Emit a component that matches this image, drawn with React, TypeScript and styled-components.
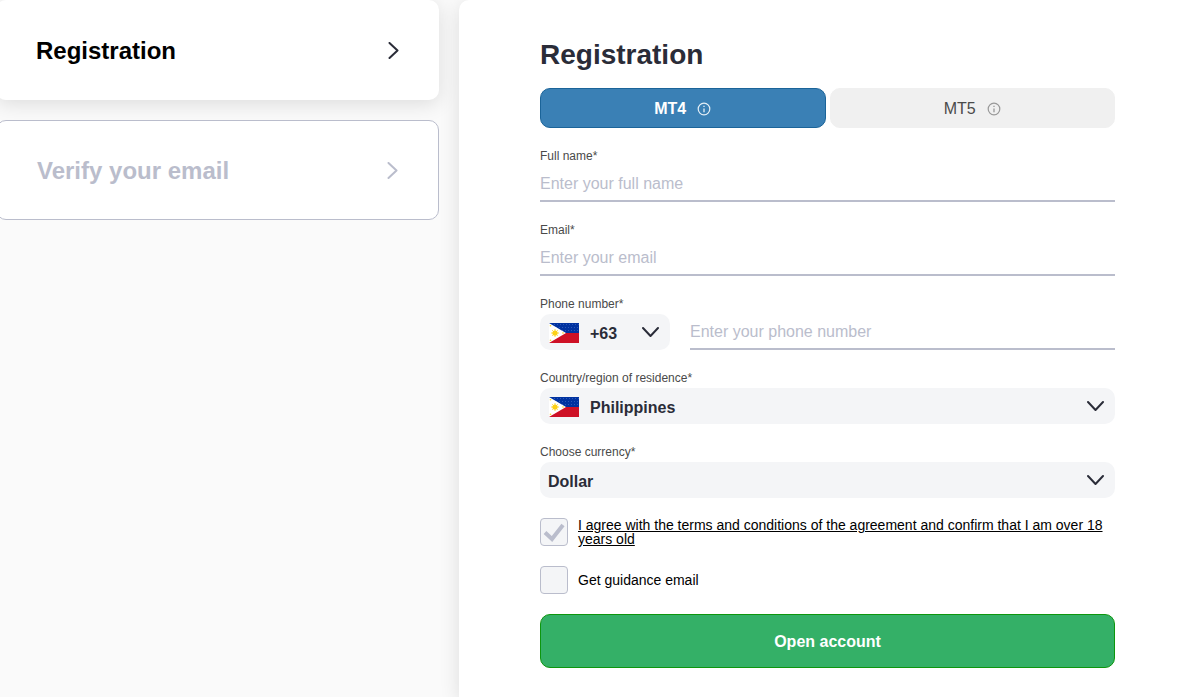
import React from "react";
import styled, { createGlobalStyle } from "styled-components";

const GlobalStyle = createGlobalStyle`
  *, *::before, *::after { box-sizing: border-box; }
  body {
    margin: 0;
    background: #fafafa;
    color: #2a2c38;
    font-family: "Liberation Sans", Arial, sans-serif;
    font-size: 16px;
  }
  button, input, select { font: inherit; color: inherit; }
`;

const Page = styled.div`
  display: grid;
  grid-template-columns: minmax(0, 443fr) minmax(0, 733fr);
  gap: 20px;
  min-height: 100vh;
  margin-left: -4px;
`;

const Steps = styled.nav`
  display: flex;
  flex-direction: column;
  gap: 20px;
`;

const Step = styled.a<{ $active?: boolean }>`
  display: flex;
  align-items: center;
  justify-content: space-between;
  height: 100px;
  padding: 2px 40px 0;
  border: ${(p) => (p.$active ? "none" : "1px solid #babdcc")};
  border-radius: 10px;
  background: #fff;
  box-shadow: ${(p) => (p.$active ? "0 4px 20px rgba(0, 0, 0, 0.12)" : "none")};
  color: ${(p) => (p.$active ? "#000" : "#babdcc")};
  font-size: 24px;
  font-weight: 700;
  line-height: 28px;
  text-decoration: none;
`;

const StepArrow = styled.svg<{ $active?: boolean }>`
  width: 11px;
  height: 18px;
  fill: none;
  stroke: ${(p) => (p.$active ? "#2a2c38" : "#babdcc")};
  stroke-width: 2;
  stroke-linecap: round;
  stroke-linejoin: round;
`;

const Panel = styled.main`
  padding: 39px 77px 28px 81px;
  border-radius: 10px 0 0 0;
  background: #fff;
  box-shadow: 0 4px 20px rgba(0, 0, 0, 0.12);
`;

const Title = styled.h1`
  margin: 0 0 17px;
  font-size: 28px;
  line-height: 32px;
`;

const Form = styled.form`
  display: flex;
  flex-direction: column;
  gap: 20px;
`;

const Fields = styled.div`
  display: flex;
  flex-direction: column;
  gap: 18px;
`;

const Tabs = styled.div`
  display: grid;
  grid-template-columns: 1fr 1fr;
  gap: 4px;
`;

const Tab = styled.button<{ $active?: boolean }>`
  display: flex;
  align-items: center;
  justify-content: center;
  gap: 11px;
  height: 40px;
  padding: 2px 0 0;
  border: 1px solid ${(p) => (p.$active ? "#1b6499" : "#f0f0f0")};
  border-radius: 10px;
  background: ${(p) => (p.$active ? "#3a80b5" : "#f0f0f0")};
  color: ${(p) => (p.$active ? "#fff" : "#4a4a4a")};
  font-weight: ${(p) => (p.$active ? 700 : 400)};
`;

const InfoSvg = styled.svg<{ $active?: boolean }>`
  width: 14px;
  height: 14px;
  fill: none;
  stroke: ${(p) => (p.$active ? "#e4eef6" : "#989898")};
`;

const Field = styled.div`
  display: flex;
  flex-direction: column;
`;

const Label = styled.label`
  color: #4a4a4a;
  font-size: 12px;
  line-height: 20px;
`;

const TextInput = styled.input`
  width: 100%;
  min-width: 0;
  height: 36px;
  padding: 2px 0 0;
  border: 0;
  border-bottom: 2px solid #babdcc;
  border-radius: 0;
  outline: 0;
  background: transparent;
  &::placeholder { color: #babdcc; opacity: 1; }
`;

const PhoneRow = styled.div`
  display: grid;
  grid-template-columns: 130px 1fr;
  gap: 20px;
`;

const SelectBox = styled.div`
  display: grid;
  grid-template-columns: 30px 1fr 18px;
  align-items: center;
  height: 36px;
  padding: 0 10px 0 9px;
  border-radius: 10px;
  background: #f4f5f7;
`;

const Select = styled.select<{ $flag?: boolean }>`
  grid-area: 1 / 1 / 2 / 4;
  height: 36px;
  margin: 0 -10px 0 -9px;
  padding: 2px 30px 0 ${(p) => (p.$flag ? 50 : 8)}px;
  border: 0;
  border-radius: 10px;
  appearance: none;
  background: transparent;
  font-weight: 700;
`;

const FlagSvg = styled.svg`
  grid-area: 1 / 1 / 2 / 2;
  width: 30px;
  height: 20px;
  margin-top: 2px;
  pointer-events: none;
`;

const Chevron = styled.svg`
  grid-area: 1 / 3 / 2 / 4;
  width: 18px;
  height: 12px;
  fill: none;
  stroke: #2a2c38;
  stroke-width: 2;
  stroke-linecap: round;
  stroke-linejoin: round;
  pointer-events: none;
`;

const CheckRow = styled.label`
  display: grid;
  grid-template-columns: 28px 1fr;
  column-gap: 10px;
  align-items: center;
  color: #000;
  font-size: 14px;
  line-height: 14px;
`;

const CheckInput = styled.input`
  grid-area: 1 / 1 / 2 / 2;
  width: 28px;
  height: 28px;
  margin: 0;
  border: 1px solid #babdcc;
  border-radius: 4px;
  appearance: none;
  background: #f4f5f7;
  & + svg { visibility: hidden; }
  &:checked + svg { visibility: visible; }
`;

const CheckMark = styled.svg`
  grid-area: 1 / 1 / 2 / 2;
  width: 28px;
  height: 28px;
  fill: none;
  stroke: #babdcc;
  stroke-width: 4;
  pointer-events: none;
`;

const TermsText = styled.span`
  text-decoration: underline;
`;

const Submit = styled.button`
  height: 54px;
  padding: 2px 0 0;
  border: 1px solid #0d960d;
  border-radius: 10px;
  background: #34b067;
  color: #fff;
  font-weight: 700;
`;

const Info = ({ active }: { active?: boolean }) => (
  <InfoSvg $active={active} viewBox="0 0 14 14" aria-hidden="true">
    <circle cx="7" cy="7" r="5.8" strokeWidth="1.2" />
    <path d="M7 6.4V10.2M7 3.8V5.1" strokeWidth="1.3" />
  </InfoSvg>
);

const Down = () => (
  <Chevron viewBox="0 0 18 12" aria-hidden="true">
    <path d="M1 2L8.5 10L16 2" />
  </Chevron>
);

const Check = () => (
  <CheckMark viewBox="0 0 28 28" aria-hidden="true">
    <path d="M5 14.5L12 21L23 7" />
  </CheckMark>
);

const Flag = () => (
  <FlagSvg viewBox="0 0 30 20" aria-hidden="true">
    <path fill="#0032a0" d="M0 0h30v10H0z" />
    <path
      stroke="#2a58b8"
      strokeWidth="1"
      strokeDasharray="1 2"
      d="M5 1.5h25M7 4.5h23M13 7.5h17"
    />
    <path fill="#ce1126" d="M0 10h30v10H0z" />
    <path fill="#fff" d="M0 0L17 10L0 20z" />
    <circle cx="6" cy="10" r="2.6" fill="#fcd116" />
    <path
      stroke="#fcd116"
      strokeWidth="0.8"
      d="M6 6v8M2 10h8M3.2 7.2l5.6 5.6M3.2 12.8l5.6-5.6"
    />
    <g fill="#fcd116">
      <circle cx="1.5" cy="2.7" r="0.8" />
      <circle cx="1.5" cy="17.3" r="0.8" />
      <circle cx="14" cy="10" r="0.8" />
    </g>
  </FlagSvg>
);

const steps = ["Registration", "Verify your email"];

export default function App() {
  return (
    <>
      <GlobalStyle />
      <Page>
        <Steps aria-label="Steps">
          {steps.map((name, i) => (
            <Step key={name} href="#" $active={i === 0}>
              {name}
              <StepArrow $active={i === 0} viewBox="0 0 11 18" aria-hidden="true">
                <path d="M1.5 1L9.5 8.5L1.5 16" />
              </StepArrow>
            </Step>
          ))}
        </Steps>
        <Panel>
          <Title>Registration</Title>
          <Form onSubmit={(e) => e.preventDefault()}>
            <Fields>
              <Tabs>
                <Tab type="button" $active>
                  MT4
                  <Info active />
                </Tab>
                <Tab type="button">
                  MT5
                  <Info />
                </Tab>
              </Tabs>
              <Field>
                <Label htmlFor="name">Full name*</Label>
                <TextInput id="name" placeholder="Enter your full name" />
              </Field>
              <Field>
                <Label htmlFor="email">Email*</Label>
                <TextInput id="email" type="email" placeholder="Enter your email" />
              </Field>
              <Field>
                <Label htmlFor="phone">Phone number*</Label>
                <PhoneRow>
                  <SelectBox>
                    <Select $flag aria-label="Country code">
                      <option>+63</option>
                    </Select>
                    <Flag />
                    <Down />
                  </SelectBox>
                  <TextInput id="phone" type="tel" placeholder="Enter your phone number" />
                </PhoneRow>
              </Field>
              <Field>
                <Label htmlFor="country">Country/region of residence*</Label>
                <SelectBox>
                  <Select id="country" $flag>
                    <option>Philippines</option>
                  </Select>
                  <Flag />
                  <Down />
                </SelectBox>
              </Field>
              <Field>
                <Label htmlFor="currency">Choose currency*</Label>
                <SelectBox>
                  <Select id="currency">
                    <option>Dollar</option>
                  </Select>
                  <Down />
                </SelectBox>
              </Field>
            </Fields>
            <CheckRow>
              <CheckInput type="checkbox" defaultChecked />
              <Check />
              <TermsText>
                I agree with the terms and conditions of the agreement and confirm that I am over 18
                years old
              </TermsText>
            </CheckRow>
            <CheckRow>
              <CheckInput type="checkbox" />
              <Check />
              <span>Get guidance email</span>
            </CheckRow>
            <Submit type="submit">Open account</Submit>
          </Form>
        </Panel>
      </Page>
    </>
  );
}
